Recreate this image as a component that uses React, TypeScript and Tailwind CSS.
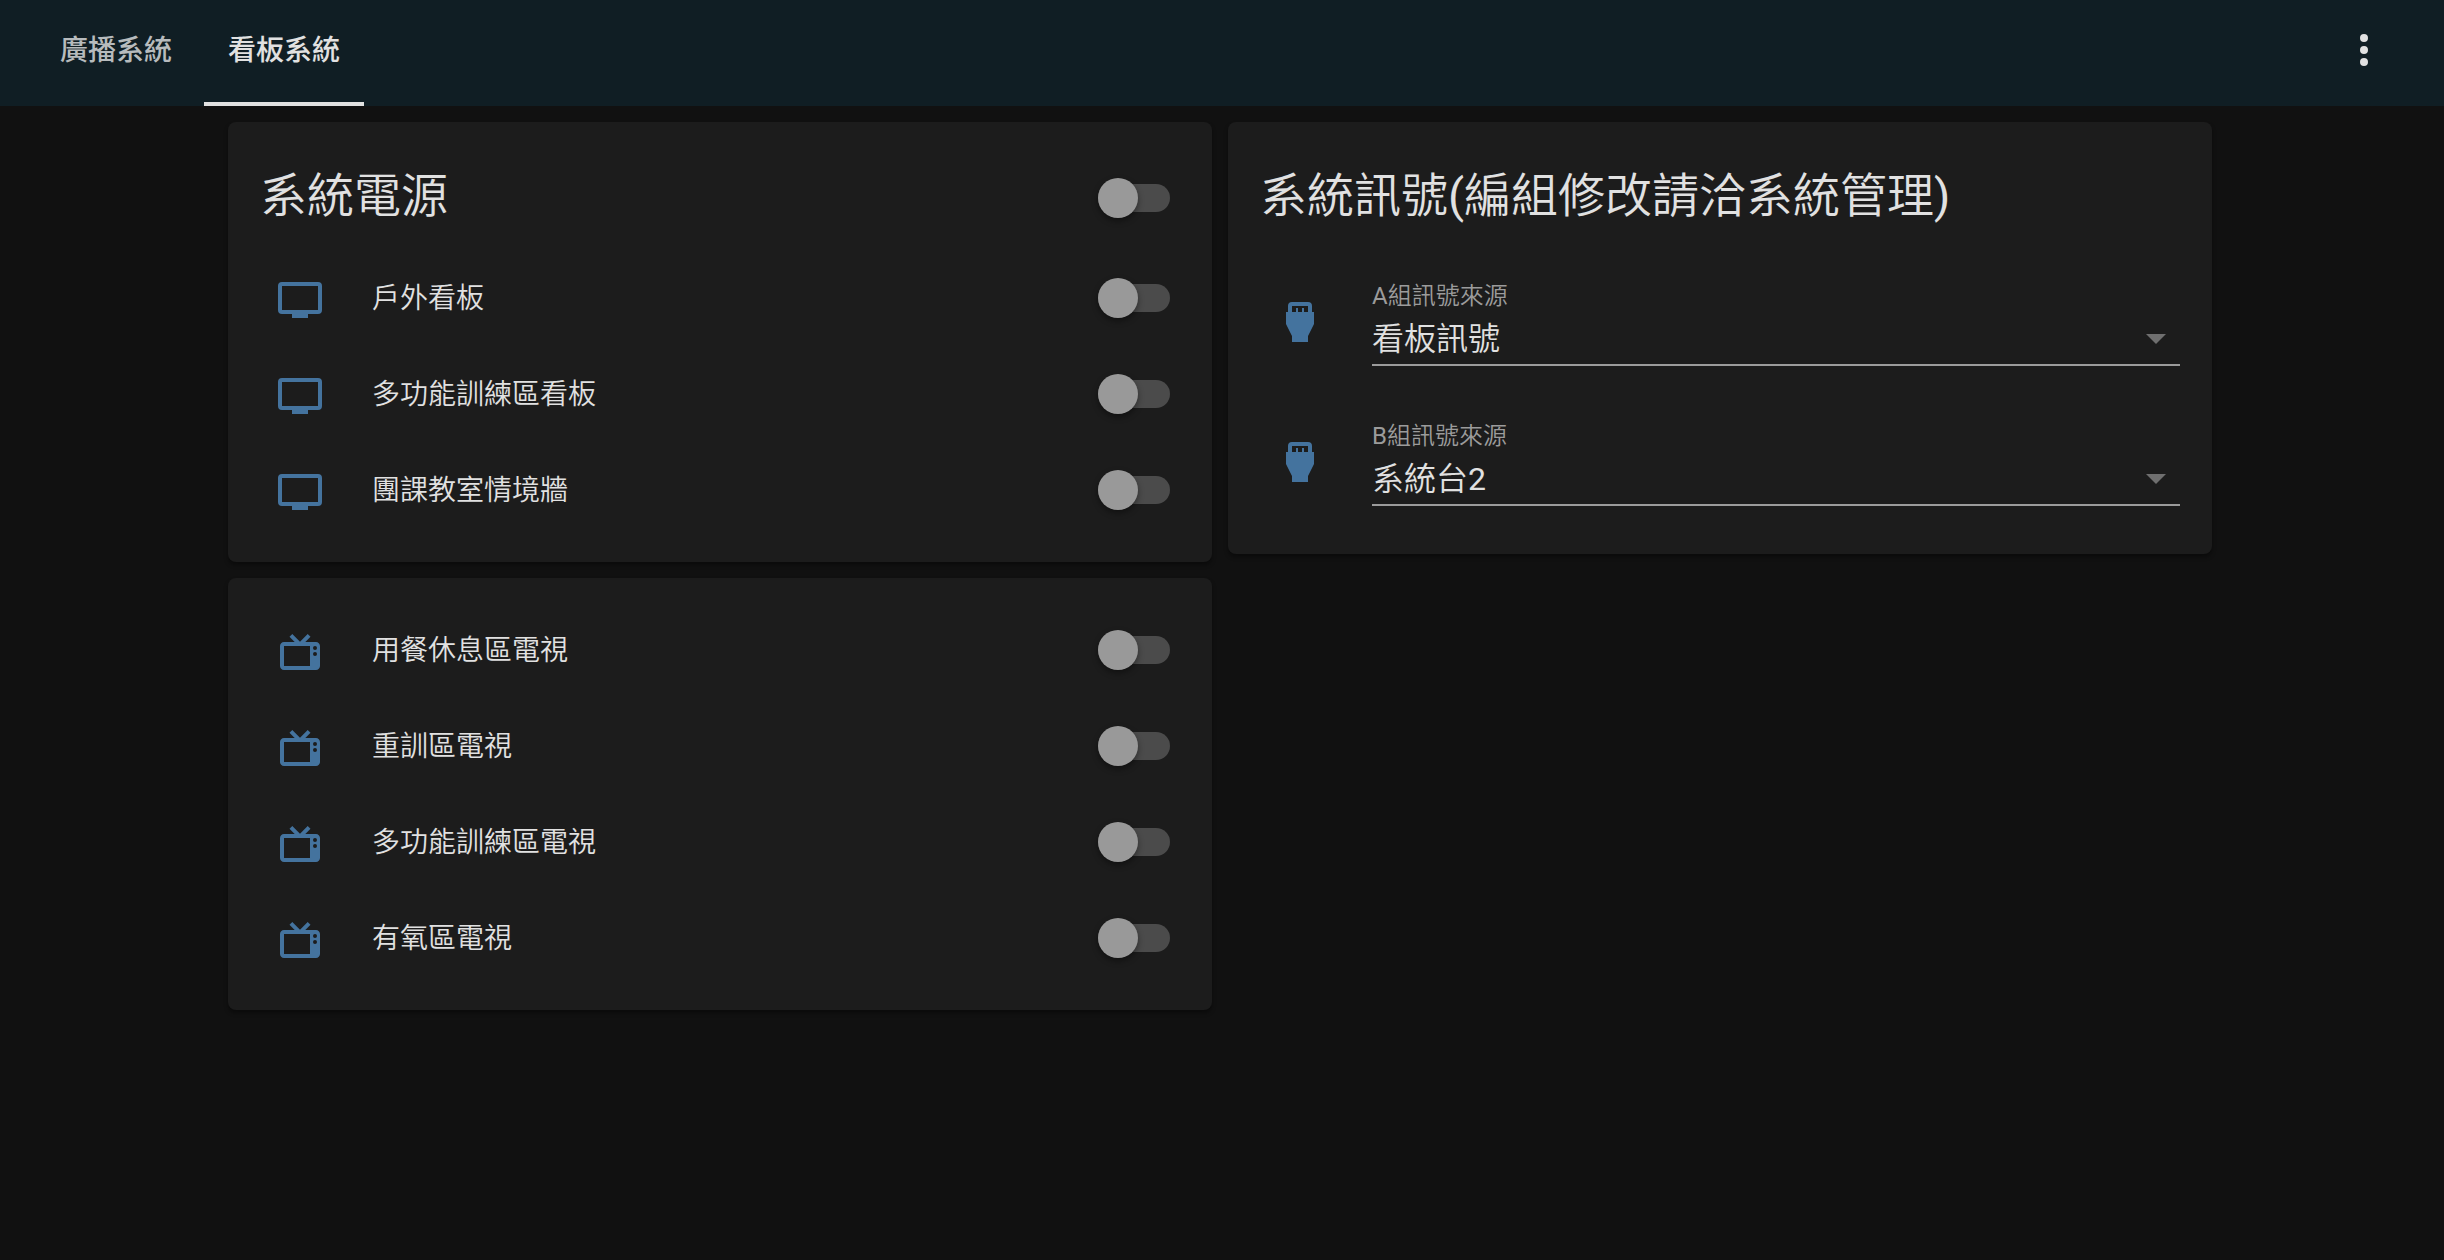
import { useState } from "react";

const icons = {
  television:
    "M21,17H3V5H21M21,3H3A2,2 0 0,0 1,5V17A2,2 0 0,0 3,19H8V21H16V19H21A2,2 0 0,0 23,17V5A2,2 0 0,0 21,3Z",
  televisionClassic:
    "M8.16,3L6.75,4.41L9.34,7H4C2.89,7 2,7.89 2,9V19C2,20.11 2.89,21 4,21H20C21.11,21 22,20.11 22,19V9C22,7.89 21.11,7 20,7H14.66L17.25,4.41L15.84,3L12,6.84L8.16,3M4,9H17V19H4V9M19.5,9A1,1 0 0,1 20.5,10A1,1 0 0,1 19.5,11A1,1 0 0,1 18.5,10A1,1 0 0,1 19.5,9M19.5,12A1,1 0 0,1 20.5,13A1,1 0 0,1 19.5,14A1,1 0 0,1 18.5,13A1,1 0 0,1 19.5,12Z",
  hdmi: "M18,7V4A2,2 0 0,0 16,2H8A2,2 0 0,0 6,4V7H5V13L8,19V22H16V19L19,13V7H18M8,4H16V7H14V5H13V7H11V5H10V7H8V4Z",
  dots: "M12,16A2,2 0 0,1 14,18A2,2 0 0,1 12,20A2,2 0 0,1 10,18A2,2 0 0,1 12,16M12,10A2,2 0 0,1 14,12A2,2 0 0,1 12,14A2,2 0 0,1 10,12A2,2 0 0,1 12,10M12,4A2,2 0 0,1 14,6A2,2 0 0,1 12,8A2,2 0 0,1 10,6A2,2 0 0,1 12,4Z",
};

const tabs = ["廣播系統", "看板系統"];
const boards = ["戶外看板", "多功能訓練區看板", "團課教室情境牆"];
const televisions = ["用餐休息區電視", "重訓區電視", "多功能訓練區電視", "有氧區電視"];
const sources = ["看板訊號", "系統台1", "系統台2"];

function Icon({ path }: { path: string }) {
  return (
    <svg viewBox="0 0 24 24" className="w-12 h-12 fill-current" fillRule="evenodd" aria-hidden="true">
      <path d={path} />
    </svg>
  );
}

function StateIcon({ path }: { path: string }) {
  return (
    <div className="w-20 pt-1 flex justify-center shrink-0 text-[#44739e]">
      <Icon path={path} />
    </div>
  );
}

function Card({ children }: { children: React.ReactNode }) {
  return <section className="bg-[#1c1c1c] rounded-lg px-8 pb-8 shadow-[0_3px_4px_rgba(0,0,0,0.4)]">{children}</section>;
}

function Toggle({ id, label }: { id: string; label?: string }) {
  const [on, setOn] = useState(false);

  return (
    <span className="relative flex items-center w-18 h-10 mr-2.5 shrink-0">
      <input
        id={id}
        type="checkbox"
        role="switch"
        aria-label={label}
        checked={on}
        onChange={(e) => setOn(e.target.checked)}
        className="peer appearance-none w-18 h-7 rounded-full bg-[#4b4b4b] checked:bg-[#2f4a61] cursor-pointer"
      />
      <span className="absolute left-0 top-0 w-10 h-10 rounded-full bg-[#999999] shadow-[0_3px_6px_rgba(0,0,0,0.4)] pointer-events-none peer-checked:left-8 peer-checked:bg-[#44739e]" />
    </span>
  );
}

function ToggleRow({ id, name, path }: { id: string; name: string; path: string }) {
  return (
    <li className="flex items-center h-20">
      <StateIcon path={path} />
      <label htmlFor={id} className="flex-1 ml-8 pt-0.5 text-[28px] leading-10">
        {name}
      </label>
      <Toggle id={id} />
    </li>
  );
}

function SourceRow({ id, label, initial }: { id: string; label: string; initial: string }) {
  const [value, setValue] = useState(initial);

  return (
    <div className="flex items-center py-4">
      <StateIcon path={icons.hdmi} />
      <div className="flex-1 ml-8">
        <label htmlFor={id} className="block pt-1 text-2xl leading-9 text-[#9b9b9b]">
          {label}
        </label>
        <div className="relative">
          <select
            id={id}
            value={value}
            onChange={(e) => setValue(e.target.value)}
            className="block w-full h-13 appearance-none bg-transparent border-b-2 border-[#9b9b9b] text-[32px] leading-12 outline-none"
          >
            {sources.map((source) => (
              <option key={source} value={source} className="bg-[#1c1c1c]">
                {source}
              </option>
            ))}
          </select>
          <svg viewBox="0 0 24 24" className="absolute right-0 top-0 w-12 h-12 fill-[#6f6f6f] pointer-events-none">
            <path d="M7,10L12,15L17,10H7Z" />
          </svg>
        </div>
      </div>
    </div>
  );
}

export default function App() {
  const [active, setActive] = useState(1);

  return (
    <div className="min-h-screen bg-[#111111] text-[#e1e1e1] font-[Roboto,'Noto_Sans_CJK_TC_DemiLight','Noto_Sans_CJK_TC',sans-serif]">
      {/* Toolbar */}
      <header className="flex items-center justify-between bg-[#101e24] pl-9 pr-8">
        <nav className="flex gap-2 font-[Roboto,'Noto_Sans_CJK_TC',sans-serif]">
          {tabs.map((tab, index) => (
            <button
              key={tab}
              onClick={() => setActive(index)}
              className={`px-6 py-7.5 border-b-4 text-[28px] leading-[42px] font-medium ${
                index === active ? "border-[#e1e1e1]" : "border-transparent text-[#b7bbbd]"
              }`}
            >
              {tab}
            </button>
          ))}
        </nav>
        <button aria-label="選單" className="px-6 pb-1.5">
          <Icon path={icons.dots} />
        </button>
      </header>

      {/* Cards */}
      <main className="pt-4 pl-4 pr-5">
        <div className="grid grid-cols-2 items-start gap-4 max-w-[1984px] mx-auto">
          <div className="flex flex-col gap-4">
            <Card>
              <div className="flex items-center justify-between h-34 pt-4">
                <h2 className="pb-1 text-[47px] leading-14">系統電源</h2>
                <Toggle id="power-all" label="系統電源" />
              </div>
              <ul className="flex flex-col gap-4">
                {boards.map((name, index) => (
                  <ToggleRow key={name} id={`board-${index}`} name={name} path={icons.television} />
                ))}
              </ul>
            </Card>
            <Card>
              <ul className="flex flex-col gap-4 pt-8">
                {televisions.map((name, index) => (
                  <ToggleRow key={name} id={`tv-${index}`} name={name} path={icons.televisionClassic} />
                ))}
              </ul>
            </Card>
          </div>

          <Card>
            <div className="flex items-center h-34 pt-4">
              <h2 className="pb-1 text-[47px] leading-14">系統訊號(編組修改請洽系統管理)</h2>
            </div>
            <div className="flex flex-col gap-4">
              <SourceRow id="source-a" label="A組訊號來源" initial="看板訊號" />
              <SourceRow id="source-b" label="B組訊號來源" initial="系統台2" />
            </div>
          </Card>
        </div>
      </main>
    </div>
  );
}
